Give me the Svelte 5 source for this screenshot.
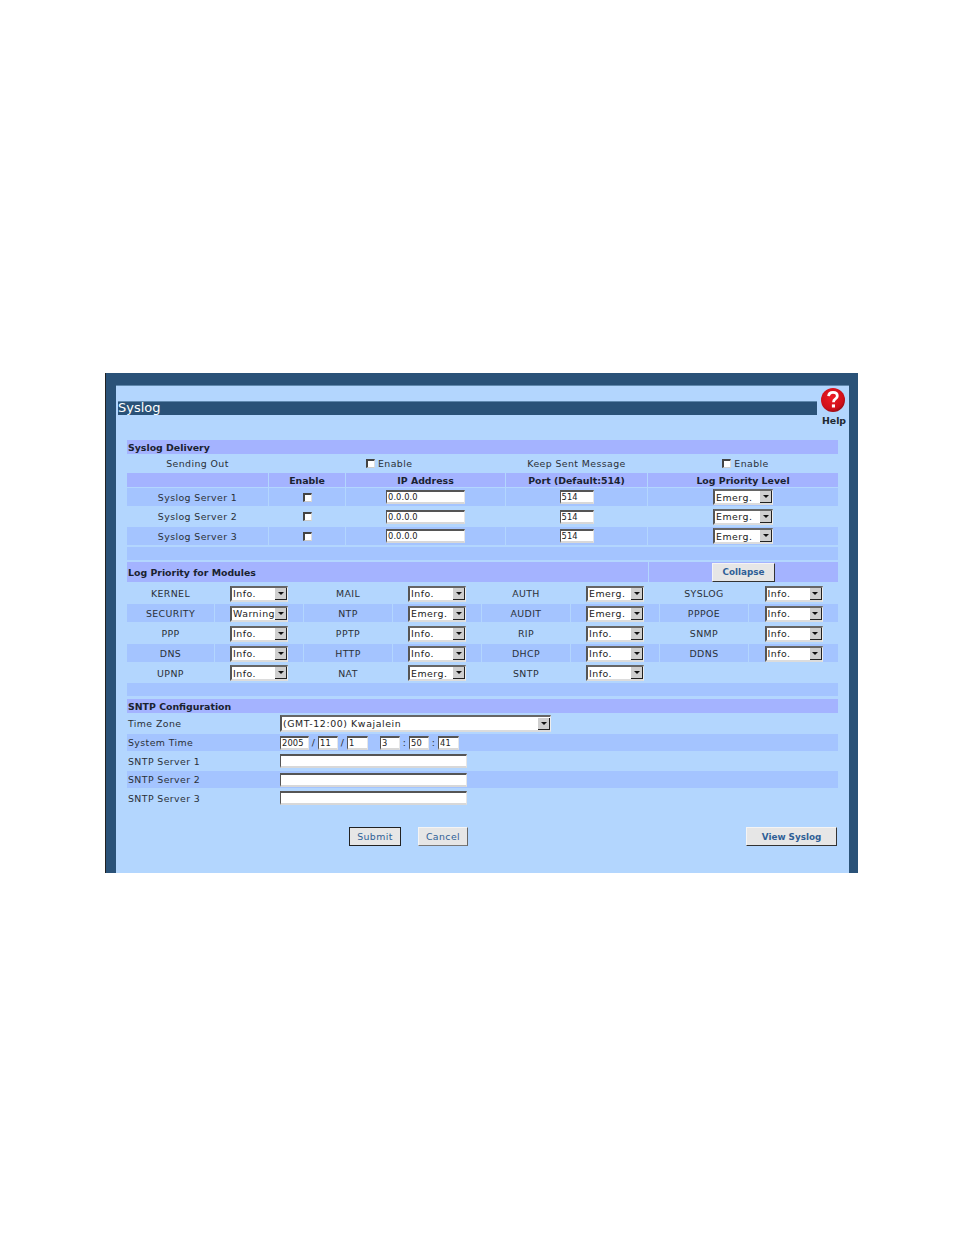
<script>
  const servers = ["Syslog Server 1", "Syslog Server 2", "Syslog Server 3"];
  const modules = [
    ["KERNEL", "Info.", "MAIL", "Info.", "AUTH", "Emerg.", "SYSLOG", "Info."],
    ["SECURITY", "Warning", "NTP", "Emerg.", "AUDIT", "Emerg.", "PPPOE", "Info."],
    ["PPP", "Info.", "PPTP", "Info.", "RIP", "Info.", "SNMP", "Info."],
    ["DNS", "Info.", "HTTP", "Info.", "DHCP", "Info.", "DDNS", "Info."],
    ["UPNP", "Info.", "NAT", "Emerg.", "SNTP", "Info.", "", ""]
  ];
  const rowHeights = ["h22", "h18", "h22", "h18", "h21"];
  const sntpServers = [
    ["SNTP Server 1", "h20 plain"],
    ["SNTP Server 2", "h17 stripe"],
    ["SNTP Server 3", "h20 plain"]
  ];
</script>

{#snippet dropdown(value, cls = "")}
  <div class="select {cls}">
    <span class="select-value">{value}</span>
    <span class="select-arrow"><i></i></span>
  </div>
{/snippet}

<div class="frame">
  <div class="panel">
    <div class="top">
      <h1 class="title">Syslog</h1>
      <div class="help">
        <svg width="24" height="24" viewBox="0 0 24 24">
          <defs>
            <radialGradient id="red" cx="45%" cy="40%" r="60%">
              <stop offset="0%" stop-color="#ee1c25" />
              <stop offset="80%" stop-color="#cf0f1a" />
              <stop offset="100%" stop-color="#9d0a14" />
            </radialGradient>
          </defs>
          <circle cx="12" cy="12" r="12" fill="url(#red)" />
          <path d="M7.6 8.2C7.8 5.6 9.6 4.4 12 4.4c2.6 0 4.3 1.4 4.3 3.5 0 1.6-.9 2.5-2.1 3.3-1.2.8-1.7 1.5-1.7 3" fill="none" stroke="#fff" stroke-width="2.8" />
          <rect x="10.9" y="16.4" width="3.1" height="3.1" fill="#fff" />
        </svg>
        <span>Help</span>
      </div>
    </div>

    <div class="content">
      <div class="section h14">Syslog Delivery</div>

      <div class="delivery h19">
        <div class="center">Sending Out</div>
        <div></div>
        <label class="enable first"><input type="checkbox" class="check" />Enable</label>
        <div class="center">Keep Sent Message</div>
        <label class="enable last"><input type="checkbox" class="check" />Enable</label>
      </div>

      <div class="delivery h14 thead">
        <div></div>
        <div>Enable</div>
        <div>IP Address</div>
        <div>Port (Default:514)</div>
        <div>Log Priority Level</div>
      </div>

      {#each servers as name, i}
        <div class="delivery {i === 1 ? 'h21 plain' : 'h18 stripe'}">
          <div>{name}</div>
          <div><input type="checkbox" class="check" /></div>
          <div><input class="text ip" value="0.0.0.0" /></div>
          <div><input class="text port" value="514" /></div>
          <div>{@render dropdown("Emerg.", "level")}</div>
        </div>
      {/each}

      <div class="spare"></div>

      <div class="section-split h20">
        <div class="section-name">Log Priority for Modules</div>
        <div class="section-action"><button class="btn collapse">Collapse</button></div>
      </div>

      {#each modules as row, r}
        <div class="modules {rowHeights[r]} {r % 2 ? 'stripe' : 'plain'}">
          {#each row as cell, c}
            <div>
              {#if c % 2 === 0}
                {cell}
              {:else if cell}
                {@render dropdown(cell)}
              {/if}
            </div>
          {/each}
        </div>
      {/each}

      <div class="spare after-modules"></div>

      <div class="section h14">SNTP Configuration</div>

      <div class="sntp h21">
        <div>Time Zone</div>
        {@render dropdown("(GMT-12:00) Kwajalein", "zone")}
      </div>
      <div class="sntp h17 stripe">
        <div>System Time</div>
        <div class="clock">
          <input class="text year" value="2005" /><span class="sep">/</span>
          <input class="text part" value="11" /><span class="sep">/</span>
          <input class="text part wide" value="1" />
          <input class="text part hour" value="3" /><span class="sep">:</span>
          <input class="text part" value="50" /><span class="sep">:</span>
          <input class="text part wide" value="41" />
        </div>
      </div>
      {#each sntpServers as [name, cls]}
        <div class="sntp {cls}">
          <div>{name}</div>
          <input class="text server-field" />
        </div>
      {/each}

      <div class="actions">
        <button class="btn submit">Submit</button>
        <button class="btn cancel">Cancel</button>
        <button class="btn view">View Syslog</button>
      </div>
    </div>
  </div>
</div>

<style>
  :global(body) {
    margin: 0;
    background: #fff;
  }

  .frame {
    box-sizing: border-box;
    width: 753px;
    height: 500px;
    margin: 373px 0 0 105px;
    padding: 12px 9px 0 10px;
    background: #2a5278;
    border-left: 1px solid #222;
    font-family: "DejaVu Sans", Verdana, sans-serif;
    font-size: 9.4px;
    letter-spacing: 0.4px;
    color: #2a3038;
  }

  .panel {
    height: 488px;
    background: #b3d6fe;
    border-top: 1px solid #5f88ad;
    box-sizing: border-box;
  }

  .top {
    display: flex;
    height: 54px;
    padding-left: 2px;
  }

  .title {
    width: 699px;
    height: 13px;
    margin: 15px 0 0;
    background: #2a5278;
    border-top: 1px solid #5f88ad;
    color: #fff;
    font-size: 13px;
    font-weight: normal;
    letter-spacing: 0;
    line-height: 11px;
  }

  .help {
    display: flex;
    flex-direction: column;
    align-items: center;
    margin: 2px 0 0 4px;
    width: 24px;
    font-size: 9.4px;
    font-weight: bold;
    letter-spacing: 0;
    line-height: 12px;
    color: #1f2a33;
  }

  .help span {
    margin-top: 3px;
    margin-left: 2px;
  }

  .content {
    width: 711px;
    margin-left: 11px;
  }

  .h14 { height: 14px; }
  .h17 { height: 17px; }
  .h18 { height: 18px; }
  .h19 { height: 19px; }
  .h20 { height: 20px; }
  .h21 { height: 21px; }
  .h22 { height: 22px; }

  .stripe > div {
    background: #a4c4ff;
  }

  .section {
    display: flex;
    align-items: center;
    padding-left: 1px;
    background: #a4b3ff;
    font-weight: bold;
    letter-spacing: 0;
    color: #1a2230;
  }

  .delivery {
    display: grid;
    grid-template-columns: 141px 76px 159px 141px 190px;
    column-gap: 1px;
  }

  .delivery > * {
    display: flex;
    align-items: center;
    justify-content: center;
  }

  .thead {
    margin-bottom: 1px;
    font-weight: bold;
    letter-spacing: 0;
    color: #1a2230;
  }

  .thead > div {
    background: #a4b3ff;
  }

  .enable {
    gap: 3px;
  }

  .enable.first {
    justify-content: flex-start;
    padding-left: 20px;
  }

  .enable.last {
    padding-left: 5px;
  }

  .check {
    appearance: none;
    box-sizing: border-box;
    width: 9px;
    height: 9px;
    margin: 0;
    background: #fff;
    border-top: 2px solid #444;
    border-left: 2px solid #444;
    border-right: 1px solid #ddd;
    border-bottom: 1px solid #ccc;
  }

  .text {
    box-sizing: border-box;
    height: 14px;
    margin: 0;
    padding: 0 0 0 1px;
    background: #fff;
    border-style: solid;
    border-width: 2px 1px 2px 1px;
    border-color: #555 #e6e6e6 #d8d8d8 #555;
    border-radius: 0;
    font-family: inherit;
    font-size: 8.3px;
    letter-spacing: 0.1px;
    color: #222;
    outline: none;
  }

  .ip { width: 79px; }
  .port { width: 34px; }

  .select {
    box-sizing: border-box;
    display: flex;
    align-items: center;
    justify-content: space-between;
    width: 58px;
    height: 16px;
    background: #fff;
    border-style: solid;
    border-width: 2px 1px 2px 2px;
    border-color: #666 #eee #dcdcdc #555;
    letter-spacing: 0.5px;
    color: #222;
  }

  .select-value {
    padding-left: 1px;
    white-space: nowrap;
    overflow: hidden;
  }

  .select-arrow {
    flex: none;
    box-sizing: border-box;
    display: flex;
    align-items: center;
    justify-content: center;
    width: 12px;
    height: 12px;
    background: #cfcfcf;
    border-right: 1px solid #222;
    border-bottom: 1px solid #222;
  }

  .select-arrow i {
    width: 0;
    height: 0;
    border-left: 3px solid transparent;
    border-right: 3px solid transparent;
    border-top: 3px solid #111;
  }

  .level { width: 60px; }

  .zone {
    width: 271px;
    height: 17px;
    letter-spacing: 0.6px;
  }

  .spare {
    height: 13px;
    margin: 2px 0;
    background: #a4c4ff;
  }

  .after-modules {
    margin: 0 0 3px;
  }

  .section-split {
    display: grid;
    grid-template-columns: 521px 189px;
    column-gap: 1px;
    font-weight: bold;
    letter-spacing: 0;
    color: #1a2230;
  }

  .section-name,
  .section-action {
    display: flex;
    align-items: center;
    background: #a4b3ff;
  }

  .section-name {
    padding-left: 1px;
  }

  .section-action {
    justify-content: center;
  }

  .modules {
    display: grid;
    grid-template-columns: 87px repeat(6, 88px) 1fr;
    column-gap: 1px;
  }

  .modules > div {
    display: flex;
    align-items: center;
    justify-content: center;
    padding-top: 1px;
    box-sizing: border-box;
  }

  .sntp {
    display: grid;
    grid-template-columns: 153px auto;
    justify-content: start;
    align-items: center;
  }

  .sntp.stripe {
    background: #a4c4ff;
  }

  .sntp.stripe > div {
    background: none;
  }

  .sntp > div:first-child {
    padding-left: 1px;
  }

  .clock {
    display: flex;
    align-items: center;
  }

  .clock .sep {
    width: 9px;
    text-align: center;
  }

  .year { width: 29px; }
  .part { width: 20px; }
  .part.wide { width: 21px; }
  .hour { margin-left: 12px; }
  .server-field { width: 187px; }

  .actions {
    display: flex;
    margin-top: 19px;
    padding-left: 222px;
  }

  .btn {
    box-sizing: border-box;
    height: 19px;
    padding: 0;
    background: #e6e6e6;
    border-style: solid;
    border-width: 1px;
    border-color: #f4f4f4 #333 #333 #f4f4f4;
    font-family: inherit;
    font-size: 8.8px;
    font-weight: bold;
    letter-spacing: 0;
    color: #2f5f96;
  }

  .submit {
    width: 52px;
    border-color: #222;
    font-size: 9.4px;
    font-weight: normal;
    letter-spacing: 0.4px;
  }

  .cancel {
    width: 50px;
    margin-left: 17px;
    border-color: #f4f4f4 #666 #777 #f4f4f4;
    font-size: 9.4px;
    font-weight: normal;
    letter-spacing: 0.4px;
  }

  .view {
    width: 91px;
    margin-left: 278px;
  }

  .collapse {
    width: 63px;
  }
</style>
